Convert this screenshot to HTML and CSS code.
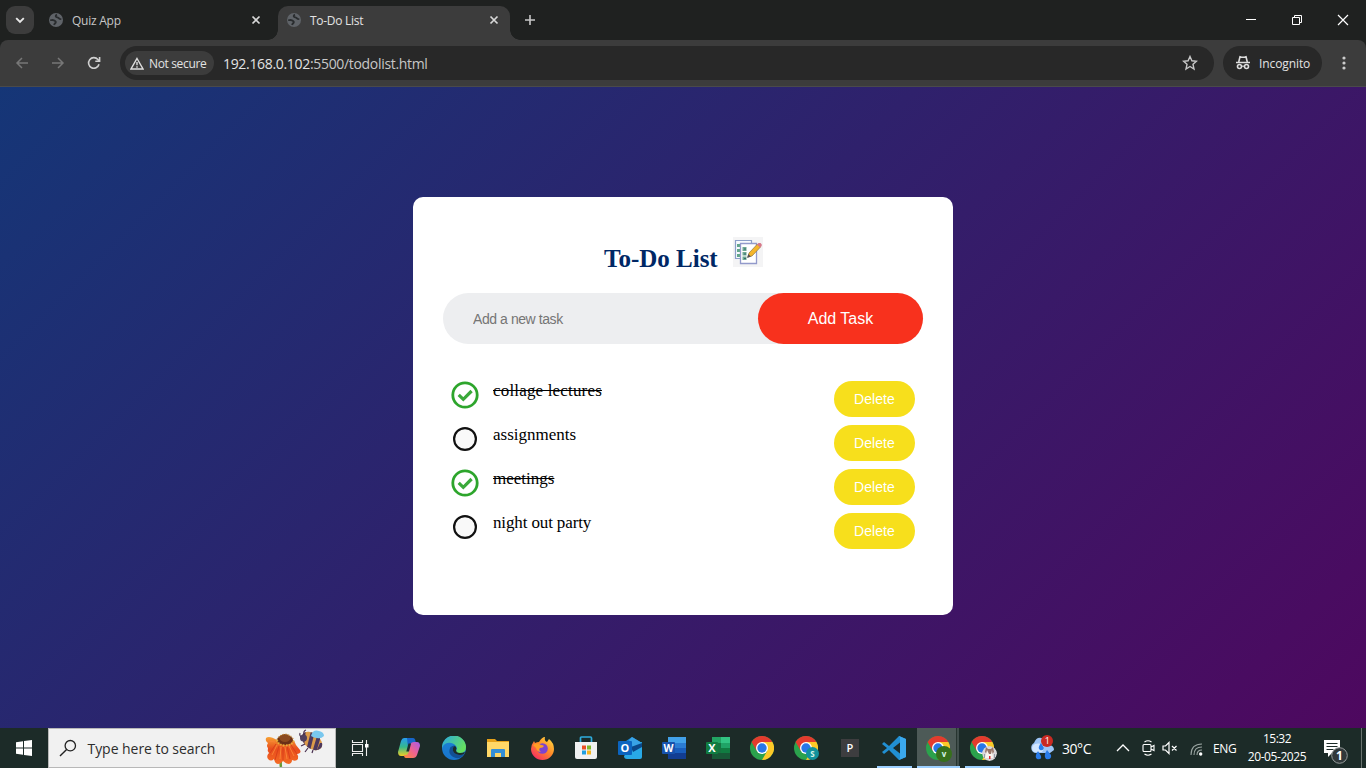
FILE: index.html
```html
<!DOCTYPE html>
<html lang="en">
<head>
<meta charset="utf-8">
<title>To-Do List</title>
<link rel="stylesheet" href="styles.css">
</head>
<body>
<svg class="defs" width="0" height="0">
  <defs>
    <symbol id="globe" viewBox="0 0 14 14"><circle cx="7" cy="7" r="7" fill="#5f6368"/><path d="M1.300 7c1.200.3 2.300-.2 3.700.3 1.500.6 2 1.200 1.700 2.200-.4.900-1.200.6-1.600 2.500M8 1.700C6.700 2.300 6.300 3.300 7.300 4c1 .6 1.700.2 2.500 1.200.6.800 1.200.9 2.500.9" fill="none" stroke="#292c2e" stroke-width="1.900"/></symbol>
    <symbol id="x" viewBox="0 0 10 10"><path d="M1.500 1.500l7 7M8.500 1.500l-7 7" stroke="#d8d8d8" stroke-width="1.700"/></symbol>
    <symbol id="chrome" viewBox="0 0 24 24">
      <circle cx="12" cy="12" r="12" fill="#2ba24c"/>
      <path d="M12 12L1.600 6A12 12 0 0 1 22.400 6z" fill="#e33b2e"/>
      <path d="M12 6h10.400A12 12 0 0 1 12 24l5.200-9z" fill="#fdc928"/>
      <path d="M1.600 6l5.200 9L12 6z" fill="#e33b2e"/>
      <circle cx="12" cy="12" r="6" fill="#fff"/><circle cx="12" cy="12" r="4.700" fill="#2877e8"/>
    </symbol>
    <symbol id="done" viewBox="0 0 28 28"><circle cx="14" cy="14" r="12.200" fill="#fff" stroke="#2da52c" stroke-width="2.800"/><path d="M7.700 13.800l4.600 4.500 8.300-8.300" fill="none" stroke="#3aa93a" stroke-width="3.200"/></symbol>
    <symbol id="open" viewBox="0 0 28 28"><circle cx="14" cy="14" r="10.900" fill="#f9f9f9" stroke="#111" stroke-width="2.200"/></symbol>
    <linearGradient id="edgeA" x1="0" y1="0" x2="1" y2=".5"><stop offset="0" stop-color="#27a7e5"/><stop offset="1" stop-color="#65df60"/></linearGradient>
    <linearGradient id="edgeB" x1="0" y1="0" x2="0" y2="1"><stop offset="0" stop-color="#1c83d6"/><stop offset="1" stop-color="#1874cc"/></linearGradient>
    <linearGradient id="copA" x1="0" y1="0" x2="0" y2="1"><stop offset="0" stop-color="#279cf1"/><stop offset=".5" stop-color="#35b98b"/><stop offset="1" stop-color="#f0cd25"/></linearGradient>
    <linearGradient id="copB" x1="1" y1="0" x2="0" y2="1"><stop offset="0" stop-color="#a65bea"/><stop offset=".5" stop-color="#ee6291"/><stop offset="1" stop-color="#ff8b36"/></linearGradient>
    <linearGradient id="fox" x1="1" y1="0" x2=".2" y2="1"><stop offset="0" stop-color="#ffe647"/><stop offset=".5" stop-color="#ff8c27"/><stop offset="1" stop-color="#f82964"/></linearGradient>
    <linearGradient id="petal" x1="0" y1="0" x2="0" y2="1"><stop offset="0" stop-color="#f7a233"/><stop offset=".45" stop-color="#e84c1c"/><stop offset="1" stop-color="#f46c25"/></linearGradient>
    <clipPath id="bee"><ellipse cx="47" cy="12" rx="11.500" ry="7.500" transform="rotate(38 47 12)"/></clipPath>
  </defs>
</svg>

<header class="browser">
  <div class="tabstrip">
    <button class="tab-search"><svg width="10" height="7" viewBox="0 0 10 7"><path d="M1.200 1.200L5 5l3.800-3.800" fill="none" stroke="#e8e8e8" stroke-width="1.900"/></svg></button>
    <div class="tab idle"><svg width="14" height="14"><use href="#globe"/></svg><span>Quiz App</span><svg class="close" width="10" height="10"><use href="#x"/></svg></div>
    <div class="tab active"><svg width="14" height="14"><use href="#globe"/></svg><span>To-Do List</span><svg class="close" width="10" height="10"><use href="#x"/></svg></div>
    <svg class="newtab" width="12" height="12" viewBox="0 0 12 12"><path d="M6 1v10M1 6h10" stroke="#c7c7c7" stroke-width="1.600"/></svg>
    <div class="window-buttons">
      <svg width="12" height="12" viewBox="0 0 12 12"><path d="M1 5.500h10" stroke="#fff"/></svg>
      <svg width="12" height="12" viewBox="0 0 12 12"><path d="M1.500 3.500h7v7h-7zM3.500 3.500v-2h7v7h-2" fill="none" stroke="#fff"/></svg>
      <svg width="12" height="12" viewBox="0 0 12 12"><path d="M1 1l10 10M11 1L1 11" stroke="#fff" stroke-width="1.200"/></svg>
    </div>
  </div>
  <div class="toolbar">
    <div class="nav">
      <svg width="14" height="14" viewBox="0 0 14 14"><path d="M13 7H2M7 2L2 7l5 5" fill="none" stroke="#777" stroke-width="1.500"/></svg>
      <svg width="14" height="14" viewBox="0 0 14 14"><path d="M1 7h11M7 2l5 5-5 5" fill="none" stroke="#777" stroke-width="1.500"/></svg>
      <svg width="14" height="14" viewBox="0 0 14 14"><path d="M12 8.300A5.300 5.300 0 1 1 10.900 3.500L12.500 5M12.600 1v4.300H8.300" fill="none" stroke="#d0d0d0" stroke-width="1.600"/></svg>
    </div>
    <div class="omnibox">
      <div class="chip"><svg width="14" height="13" viewBox="0 0 14 13"><path d="M7 1.500L13 12H1z" fill="none" stroke="#ddd" stroke-width="1.400"/><path d="M7 5v3.300M7 9.300v1.400" stroke="#ddd" stroke-width="1.400"/></svg><span>Not secure</span></div>
      <span class="url">192.168.0.102<i>:5500/todolist.html</i></span>
      <svg class="star" width="16" height="16" viewBox="0 0 16 16"><path d="M8 1.500l1.900 4.300 4.600.4-3.500 3.100 1 4.700L8 11.500 4 14l1-4.700-3.500-3.100 4.600-.4z" fill="none" stroke="#c8c8c8" stroke-width="1.400"/></svg>
    </div>
    <div class="incognito"><svg width="16" height="16" viewBox="0 0 16 16"><path d="M1 7.500h14" stroke="#ddd" stroke-width="1.500"/><path d="M3.700 7L5 1.700l1.500.5h3l1.500-.5L12.300 7" fill="none" stroke="#ddd" stroke-width="1.600"/><circle cx="4.500" cy="11.500" r="2" fill="none" stroke="#ddd" stroke-width="1.600"/><circle cx="11.500" cy="11.500" r="2" fill="none" stroke="#ddd" stroke-width="1.600"/><path d="M6.500 11.500q1.500-1 3 0" fill="none" stroke="#ddd" stroke-width="1.200"/></svg><span>Incognito</span></div>
    <svg class="menu" width="4" height="14" viewBox="0 0 4 14"><g fill="#ccc"><circle cx="2" cy="2" r="1.600"/><circle cx="2" cy="7" r="1.600"/><circle cx="2" cy="12" r="1.600"/></g></svg>
  </div>
</header>

<main class="container">
  <section class="todo-app">
    <h2><span>To-Do List</span>
      <svg width="30" height="30" viewBox="0 0 30 30"><path d="M0 0h30v30H0z" fill="#f4f4f5"/><path d="M2.500 3.500h16v18h-16z" fill="#f8fbff" stroke="#8c9fc9" stroke-width="1.200"/><path d="M4 7h3v3H4zM4 12h3v3H4zM4 17h3v3H4z" fill="#62a68a"/><path d="M7.500 6.500h16v20h-16z" fill="#fff" stroke="#929acb" stroke-width="1.300"/><path d="M9.500 10h4v4h-4zM9.500 15h4v3.500h-4zM9.500 19.500h4V23h-4z" fill="#6fa993"/><path d="M11 12h2M11 17h2M11 21.500h2" stroke="#326a70"/><path d="M15 20l1-4L24.500 7l3 3L19 19z" fill="#f5b62b" stroke="#8e7441" stroke-width=".7"/><path d="M24 7.500l1.500-1.600h2l1.200 1.400v1.600l-1.500 1.500z" fill="#d7798a"/><path d="M14 21l1.300-4 2.600 2.600z" fill="#535052"/></svg>
    </h2>
    <div class="entry"><input type="text" placeholder="Add a new task"><button>Add Task</button></div>
    <ul class="tasks">
      <li class="checked"><svg width="28" height="28"><use href="#done"/></svg><span class="wide">collage lectures</span><button>Delete</button></li>
      <li><svg width="28" height="28"><use href="#open"/></svg><span>assignments</span><button>Delete</button></li>
      <li class="checked"><svg width="28" height="28"><use href="#done"/></svg><span>meetings</span><button>Delete</button></li>
      <li><svg width="28" height="28"><use href="#open"/></svg><span class="tight">night out party</span><button>Delete</button></li>
    </ul>
  </section>
</main>

<footer class="taskbar">
  <div class="start"><svg width="16" height="16" viewBox="0 0 16 16"><path d="M0 2.200L7 1.200v6.300H0zM8 1l8-1v7.500H8zM0 8.500h7v6.300l-7-1zM8 8.500h8V16l-8-1.100z" fill="#fff"/></svg></div>
  <div class="search">
    <svg width="18" height="18" viewBox="0 0 18 18"><circle cx="11.300" cy="6.700" r="5.200" fill="none" stroke="#222" stroke-width="1.300"/><path d="M7.600 10.400L1 17" stroke="#222" stroke-width="1.400"/></svg>
    <span>Type here to search</span>
    <svg class="flower" width="60" height="38" viewBox="0 0 60 38">
      <path d="M17 28q-2 5-1 10" fill="none" stroke="#669a32" stroke-width="2.500"/>
      <path d="M12 11Q4 6 1 9q-1 3 2 5-2 3 0 5-1 3 1 5-3 3-1 6 3 3 6 0 1 5 4 5 3 0 5-3 3 3 6 3 3-1 3-4 4 2 6-1 1-3-1-5 5-1 3-4l-4-5q-2-6-6-6z" fill="url(#petal)"/>
      <path d="M11 15L5 24M14 17l-4 14M18 18v13M22 17l3 13M26 16l6 9" stroke="#d9401a" stroke-width="1"/>
      <path d="M10 13L4 12M12 16L7 26M16 18l-1 12M20 18l2 12M24 17l5 10" stroke="#f98335" stroke-width="1"/>
      <ellipse cx="20" cy="11" rx="8" ry="5" fill="#6a3017"/><ellipse cx="20" cy="9" rx="5.500" ry="4" fill="#8b4a20"/>
      <path d="M12 11q1 5 8 5.500 7 0 9-5" fill="none" stroke="#e4b03c" stroke-width="2" stroke-dasharray="1.500 1.300"/>
      <path d="M12 11q2-5 8-6 6 1 9 6" fill="none" stroke="#bd8432" stroke-width="1.200" stroke-dasharray="1.200 1.500"/>
      <g clip-path="url(#bee)"><path d="M34 0h26v26H34z" fill="#dc9b4a"/><path d="M35 0h6l-2 18h-6zM46 2l-5 20h4l5-20zM52 7l-5 17h4l5-17z" fill="#4c385e"/><path d="M55 14l-4 9h8v-9z" fill="#4c385e"/></g>
      <circle cx="38.500" cy="9" r="3.500" fill="#51405e"/><path d="M46 7q2-7 8-5 5 1 5 5-3 3-7 2-3 0-6-2z" fill="#79c7ee"/>
      <path d="M39 6q-1-4 2-5M36 8q-2-2-1-4M40 15l-4 2M43 19l-3 4M48 21l-1 3" fill="none" stroke="#493050" stroke-width="1.200"/>
    </svg>
  </div>
  <div class="taskview"><svg width="18" height="16" viewBox="0 0 18 16"><path d="M1.500 0v2.500h10V0M1.500 16v-2.500h10V16M1.500 4.500v7h10v-7zM15.500 0v16" fill="none" stroke="#eee" stroke-width="1.100"/><path d="M14 4h3.500v3.500H14z" fill="#fff"/></svg></div>
  <div class="apps">
    <div class="app copilot"><svg width="24" height="24" viewBox="0 0 24 24"><path d="M7 2h8q2 0 1 4l-3 11q-1 3-4 3H4q-3 0-3-4L4 5q1-3 3-3z" fill="url(#copA)"/><path d="M10 2h6q2 0 2.500 3L19 8h-4q-3 0-4 4z" fill="#1765c9"/><path d="M13 9q1-3 4-3h3q3 0 3 4l-3 9q-1 3-4 3H9q-2 0-2-3h2q2 0 3-4z" fill="url(#copB)"/><path d="M11.500 7.500h2.600L12 15.500H9.300z" fill="#1b302f"/></svg></div>
    <div class="app"><svg width="24" height="24" viewBox="0 0 24 24"><circle cx="12" cy="12" r="12" fill="url(#edgeB)"/><path d="M0 12A12 12 0 0 1 24 11q0 6-6 6-5 0-3.500-3 1-2-.5-4C10 5 2 6 0 12z" fill="url(#edgeA)"/><path d="M8.500 11q-4 8 5.500 11 5 1 8-4-4 2-8 0-4-2-3-6 1-2 3-1-1-3-5.500 0z" fill="#124f94"/><path d="M11 12q1-3 3-1 1 2 0 3 0 3 4 3 3 0 5-1l-1 2q-4 2-8 0-4-2-3-6z" fill="#1c2b28"/></svg></div>
    <div class="app"><svg width="22" height="20" viewBox="0 0 22 20"><path d="M0 1h8l2 2h12v4H0z" fill="#e6a119"/><path d="M0 4h22v15H0z" fill="#ffd767"/><path d="M4 12q0-1 1-1h12q1 0 1 1v7h-4v-4H8v4H4z" fill="#348fd6"/></svg></div>
    <div class="app"><svg width="23" height="23" viewBox="0 0 23 23"><path d="M3 4l1 2q2-1 4-1Q11 0 14 0q-1 4 2 5l2-3q5 4 5 10a11.500 11 0 1 1-23 0Q0 8 3 4z" fill="url(#fox)"/><circle cx="11.500" cy="11.500" r="5.300" fill="#7d43d0"/><path d="M2 8q4-3 8 0 2 0 3 1-1 2-4 2-2 2 1 4-4 0-5-4z" fill="#ff9e24"/></svg></div>
    <div class="app"><svg width="24" height="24" viewBox="0 0 24 24"><path d="M6.500 7V2q0-1 1-1h9q1 0 1 1v5" fill="none" stroke="#2eaddd" stroke-width="1.700"/><path d="M1 6h22v15q0 2-2 2H3q-2 0-2-2z" fill="#f0f1f1"/><path d="M8 9.500h4v4H8z" fill="#ea5024"/><path d="M13 9.500h4v4h-4z" fill="#7fb82b"/><path d="M8 14.500h4v4H8z" fill="#209fe0"/><path d="M13 14.500h4v4h-4z" fill="#f4b421"/></svg></div>
    <div class="app"><svg width="24" height="22" viewBox="0 0 24 22"><path d="M5 6l9-6 10 6v7H5z" fill="#1480d3"/><path d="M14 0l10 6-8 6-5-9z" fill="#39a3e6"/><path d="M14 10l10-5v15q0 2-2 2H9q-3 0-3-3z" fill="#28a9e7"/><path d="M13 10l11-4v4l-9 5z" fill="#0b4889"/><rect y="4" width="14" height="14" rx="1" fill="#0b64bf"/><text x="7" y="15" text-anchor="middle">O</text></svg></div>
    <div class="app"><svg width="24" height="22" viewBox="0 0 24 22"><path d="M6 0h18v6H6z" fill="#42a1e9"/><path d="M6 6h18v5H6z" fill="#2b7cd3"/><path d="M6 11h18v5H6z" fill="#195ebd"/><path d="M6 16h18v6H6z" fill="#123d92"/><rect y="5" width="13" height="12" rx="1" fill="#1752ad"/><text x="6.500" y="15" text-anchor="middle" textLength="10" lengthAdjust="spacingAndGlyphs">W</text></svg></div>
    <div class="app"><svg width="24" height="22" viewBox="0 0 24 22"><path d="M6 0h9v6H6z" fill="#22a463"/><path d="M15 0h9v6h-9z" fill="#32c483"/><path d="M6 6h9v10H6z" fill="#167441"/><path d="M15 6h9v5h-9z" fill="#20a366"/><path d="M15 11h9v5h-9z" fill="#107c41"/><path d="M6 16h18v6H6z" fill="#175937"/><rect y="5" width="12" height="12" rx="1" fill="#107c41"/><text x="6" y="15" text-anchor="middle">X</text></svg></div>
    <div class="app"><svg width="24" height="24"><use href="#chrome"/></svg></div>
    <div class="app"><svg width="24" height="24"><use href="#chrome"/></svg><b class="badge teal">S</b></div>
    <div class="app"><b class="p-app">P</b></div>
    <div class="app running"><svg width="24" height="24" viewBox="0 0 24 24"><path d="M17 0l7 3v18l-7 3L7 14l-5 4-2-2 5-4-5-4 2-2 5 4zM18 6.500L11 12l7 5.500z" fill="#218fd2"/><path d="M17 0l7 3v18l-7 3 1-2V2z" fill="#3ba9ed"/></svg></div>
    <div class="app running selected"><svg width="24" height="24"><use href="#chrome"/></svg><b class="badge green">v</b></div>
    <div class="app running"><svg width="24" height="24"><use href="#chrome"/></svg><svg class="badge photo" viewBox="0 0 15 15"><circle cx="7.500" cy="7.500" r="7.500" fill="#dad8da"/><path d="M4 1l2 2h3l2-2 1 5-3 3H6L3 6z" fill="#987568"/><path d="M5 4l2 4h2l1-4 1 8H3z" fill="#faf6ef"/><path d="M7 10h1.500v3H7z" fill="#d92f34"/><path d="M2.500 8v4M12.500 8v4" stroke="#7a8290" stroke-width=".7"/></svg></div>
  </div>
  <div class="weather"><svg width="26" height="26" viewBox="0 0 26 26"><path d="M6 18a5.500 5.500 0 0 1-1-10Q8 0 15 4q6 0 6 6 4 1 4 5l-4 3z" fill="#9dc5f7"/><path d="M5 17a4.500 4.500 0 0 1 1-8q7-2 9 4l-2 4z" fill="#d0e5ff"/><path d="M12 8q-4 5-1 7 3 1 4-2zM9 16q-4 6-1 8 5 1 4-3zM18 15q-4 6-1 9 6 1 5-4z" fill="#287bea"/><circle cx="18" cy="6" r="6" fill="#c92a22"/><text class="count" x="18" y="9.200" text-anchor="middle">1</text></svg><span>30°C</span></div>
  <div class="tray">
    <svg width="14" height="8" viewBox="0 0 14 8"><path d="M1 7l6-6 6 6" fill="none" stroke="#fff" stroke-width="1.300"/></svg>
    <svg class="camera" width="13" height="16" viewBox="0 0 13 16"><path d="M2 4.500h6q1 0 1 1v5q0 1-1 1H2q-1 0-1-1v-5q0-1 1-1zM9 7l3-1.500v5L9 9M2.500 2q3.500-2.500 7 0M2.500 14q3.500 2.500 7 0" fill="none" stroke="#fff" stroke-width="1.100"/></svg>
    <svg class="sound" width="16" height="14" viewBox="0 0 16 14"><path d="M1 5h2.500L7 1.500v11L3.500 9H1zM10 5l4.500 4.500M14.500 5L10 9.500" fill="none" stroke="#fff" stroke-width="1.200"/></svg>
    <svg class="wifi" width="13" height="13" viewBox="0 0 13 13"><g fill="none" stroke="#99a4a1" stroke-width="1.100"><path d="M1 12Q1 1 12 1M4 12q0-8 8-8M7 12q0-5 5-5"/></g><circle cx="10.700" cy="11" r="1.700" fill="#fff"/></svg>
    <span class="lang">ENG</span>
    <div class="clock"><span>15:32</span><span class="date">20-05-2025</span></div>
    <div class="notice"><svg width="24" height="24" viewBox="0 0 24 24"><path d="M0 0h16v13H8l-4 4v-4H0z" fill="#fff"/><path d="M2.500 3.500h11M2.500 6.500h11M2.500 9.500h7" stroke="#1c2b28"/><circle cx="15.500" cy="15.500" r="7.800" fill="#30383a" stroke="#969c9b"/><text class="notice-count" x="15.500" y="19.700" text-anchor="middle">1</text></svg></div>
  </div>
</footer>
</body>
</html>
```

FILE: styles.css
```css
* { box-sizing: border-box; margin: 0; padding: 0; }
body { width: 1366px; height: 768px; overflow: hidden; display: flex; flex-direction: column; font-family: "Open Sans", sans-serif; }
svg { display: block; flex: none; }
button { border: 0; }
.defs { position: absolute; }
.browser { height: 87px; flex: none; color: #e3e3e3; font-size: 12px; background: #1f2120; }
.tabstrip { height: 40px; display: flex; align-items: center; padding-left: 6px; }
.tab-search { width: 28px; height: 28px; border-radius: 9px; background: #3c3c3c; display: flex; align-items: center; justify-content: center; }
.tab { display: flex; align-items: center; gap: 9px; white-space: nowrap; }
.tab .close { margin-left: auto; }
.idle { width: 212px; margin-left: 15px; color: #c7c7c7; letter-spacing: -.25px; }
.active { position: relative; width: 232px; height: 34px; margin: 6px 0 0 17px; padding: 0 11px 6px 9px; border-radius: 10px 10px 0 0; background: #3c3c3c; letter-spacing: -.28px; }
.active::before, .active::after { content: ""; position: absolute; bottom: 0; width: 10px; height: 10px; }
.active::before { left: -10px; background: radial-gradient(circle at 0 0, #1f2120 9.5px, #3c3c3c 10px); }
.active::after { right: -10px; background: radial-gradient(circle at 100% 0, #1f2120 9.5px, #3c3c3c 10px); }
.newtab { margin-left: 14px; }
.window-buttons { display: flex; gap: 34px; margin-left: auto; padding-right: 17px; }
.toolbar { height: 47px; display: flex; align-items: center; background: #3c3c3c; border-radius: 8px 8px 0 0; border-bottom: 1px solid #4a4a4a; }
.nav { width: 120px; display: flex; gap: 22px; padding-left: 15px; }
.omnibox { width: 1094px; height: 34px; display: flex; align-items: center; padding: 0 16px 0 5px; border-radius: 17px; background: #282828; }
.chip { width: 89px; height: 24px; display: flex; align-items: center; gap: 5px; padding-left: 5px; border-radius: 12px; background: #3c3c3c; white-space: nowrap; letter-spacing: -.35px; }
.url { margin-left: 9px; font-size: 14px; letter-spacing: -.32px; }
.url i { font-style: normal; color: #c7c7c7; }
.star { margin-left: auto; }
.incognito { width: 99px; height: 34px; margin-left: 9px; padding-left: 12px; display: flex; align-items: center; gap: 8px; border-radius: 17px; background: #282828; letter-spacing: -.1px; }
.menu { margin-left: 20px; }

.container { height: 641px; flex: none; padding-top: 110px; background: linear-gradient(135deg, #153677, #4e085f); }
.todo-app { width: 540px; height: 418px; margin: 0 auto; padding: 40px 30px; border-radius: 10px; background: #fff; }
h2 { height: 36px; display: flex; align-items: flex-start; padding-left: 161px; color: #002765; font: bold 25px/29px "Liberation Serif", serif; }
h2 span { width: 114px; margin: 7px 15px 0 0; white-space: nowrap; letter-spacing: 0; }
.entry { height: 51px; margin-top: 20px; display: flex; border-radius: 26px; background: #edeef0; }
.entry input { width: 315px; border: 0; outline: 0; background: transparent; padding: 1px 10px 0 30px; font: 14px "Liberation Sans", sans-serif; letter-spacing: -.43px; }
.entry input::placeholder { color: #757575; }
.entry button { width: 165px; border-radius: 26px; background: #f8311d; color: #fff; font: 16px "Liberation Sans", sans-serif; letter-spacing: -.03px; }
.tasks { list-style: none; margin-top: 33px; padding: 0 8px; }
.tasks li { height: 44px; display: flex; align-items: flex-start; padding-top: 4px; font: 17px/20px "Liberation Serif", serif; color: #000; }
.tasks span { margin-left: 14px; white-space: nowrap; letter-spacing: 0; }
.tasks .wide { letter-spacing: .17px; }
.tasks .tight { letter-spacing: -.13px; }
.checked span { text-decoration: line-through; }
.tasks button { width: 81px; height: 36px; margin-left: auto; border-radius: 18px; background: #f7df1c; color: #fff; font: 14px "Liberation Sans", sans-serif; letter-spacing: .07px; }

.taskbar { height: 40px; flex: none; display: flex; background: #1c2b28; color: #fff; }
.start { width: 48px; display: flex; align-items: center; justify-content: center; }
.search { width: 288px; display: flex; align-items: center; padding: 0 10px; background: #f1f1f1; border: 1px solid #b8b8b8; color: #2d2d2d; font-size: 14px; letter-spacing: -.05px; }
.search span { margin-left: 10.500px; white-space: nowrap; }
.flower { align-self: flex-end; margin-left: auto; }
.taskview { width: 52px; display: flex; align-items: center; padding-left: 15px; }
.apps { display: flex; width: 616px; }
.app { position: relative; width: 44px; display: flex; align-items: center; justify-content: center; }
.app text { fill: #fff; font: bold 11px "Open Sans", sans-serif; }
.copilot { padding-right: 2px; }
.running::after { content: ""; position: absolute; left: 5px; bottom: 0; width: 35px; height: 2px; background: #9ccfff; }
.selected { background: linear-gradient(90deg, transparent 1px, #4d5a57 1px 40px, #273530 40px 41px, #414f4c 41px 43.500px, transparent 43.500px); }
.selected::after { left: 1px; width: 43px; }
.badge { position: absolute; left: 22px; top: 19px; width: 13px; height: 13px; border-radius: 50%; color: #d9f5e9; font: bold 8px/13px "Open Sans", sans-serif; text-align: center; }
.teal { background: #12919c; }
.green { left: 20px; top: 18px; width: 16px; height: 16px; line-height: 15px; background: #37701c; }
.photo { left: 22px; top: 18px; width: 15px; height: 15px; }
.p-app { width: 18px; height: 18px; background: #3d3d3f; font: 600 11px/18px "Open Sans", sans-serif; text-align: center; }
.weather { width: 112px; display: flex; align-items: center; gap: 7px; padding-left: 25px; font-size: 14px; letter-spacing: -.45px; }
.count { fill: #fff; font: 9px "Open Sans", sans-serif; }
.tray { flex: 1; display: flex; align-items: center; }
.camera { margin-left: 12px; }
.sound { margin-left: 7px; }
.wifi { margin: 2px 0 0 12px; }
.lang { width: 24px; margin-left: 10px; font-size: 12px; letter-spacing: -.4px; }
.clock { width: 60px; margin-left: 10px; display: flex; flex-direction: column; align-items: center; font-size: 12px; line-height: 18px; letter-spacing: -.5px; white-space: nowrap; }
.date { letter-spacing: -.42px; }
.notice { height: 40px; margin-left: 17px; padding-top: 12px; width: 38px; border-right: 1px solid #69736f; }
.notice-count { fill: #fff; font: bold 12px "Open Sans", sans-serif; }
```
